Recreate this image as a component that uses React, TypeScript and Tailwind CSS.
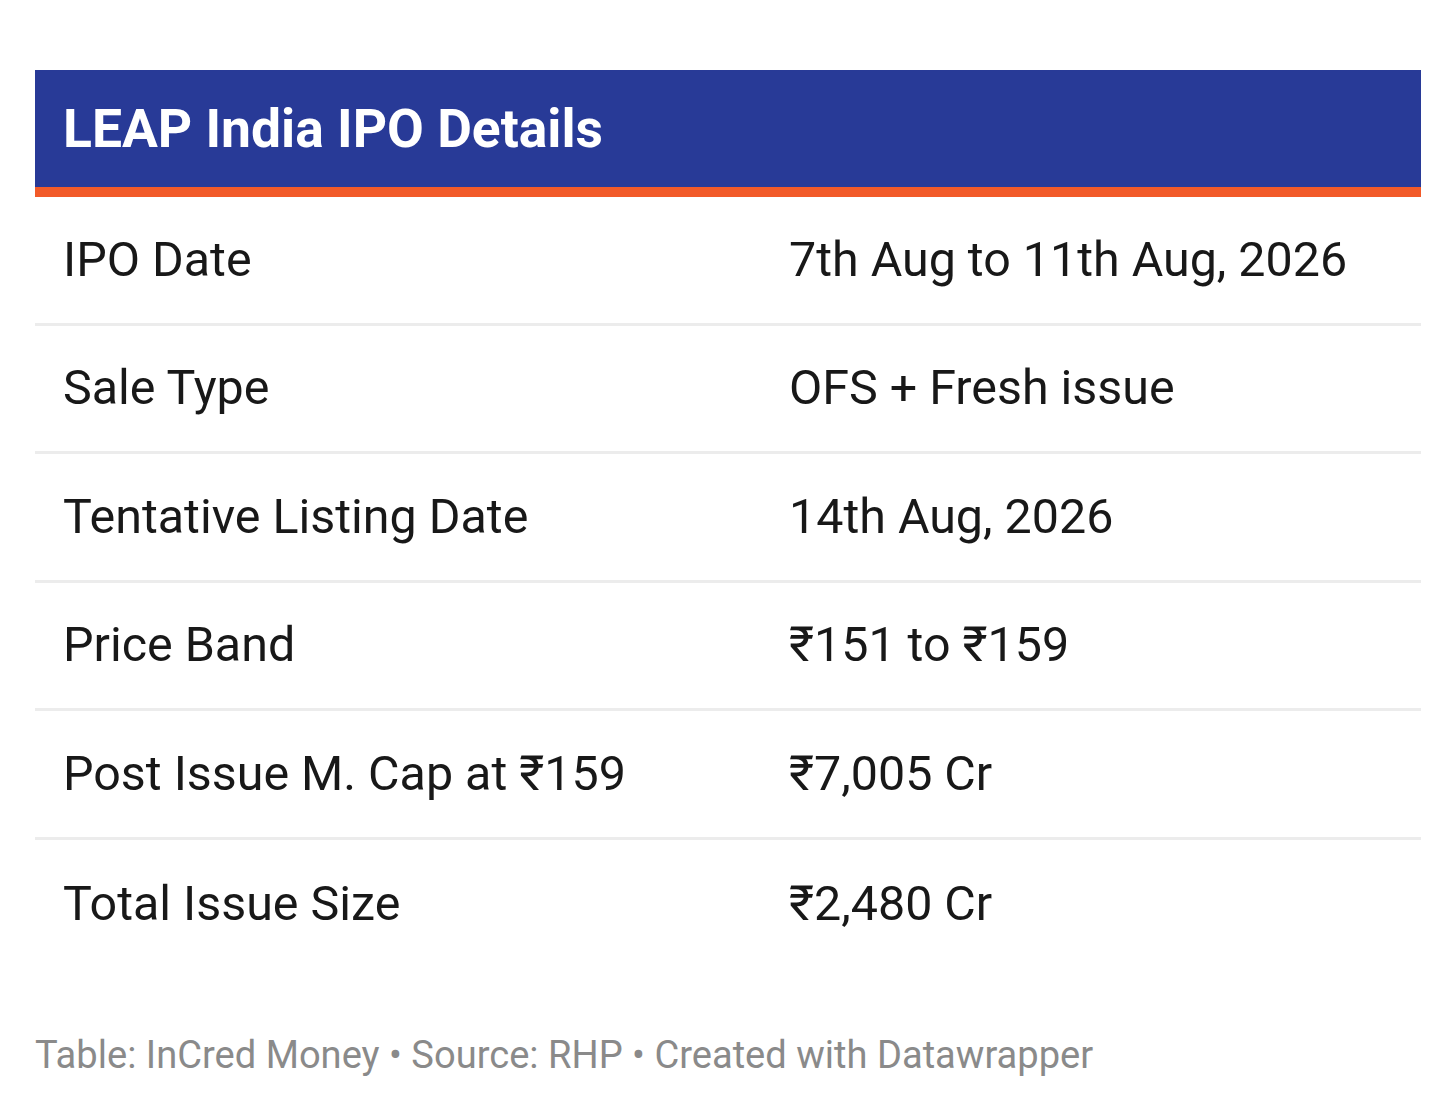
import React from 'react';

const ROWS: [string, string][] = [
    ['IPO Date', '7th Aug to 11th Aug, 2026'],
    ['Sale Type', 'OFS + Fresh issue'],
    ['Tentative Listing Date', '14th Aug, 2026'],
    ['Price Band', '₹151 to ₹159'],
    ['Post Issue M. Cap at ₹159', '₹7,005 Cr'],
    ['Total Issue Size', '₹2,480 Cr'],
];

const App: React.FC = () => {
    return (
        <div className="min-h-[1113px] bg-white pt-[70px] px-[35px] font-['Roboto',sans-serif]">
            <div className="w-[1386px]">
                <div className="h-[127px] bg-[#283a97] border-b-[10px] border-[#f25a29] flex items-center pl-[28px]">
                    <h1 className="text-[53.4px] font-bold text-white leading-none">LEAP India IPO Details</h1>
                </div>
                {ROWS.map(([label, value], i) => (
                    <div
                        key={label}
                        className={
                            i < ROWS.length - 1
                                ? 'grid grid-cols-[755px_1fr] h-[128.5px] items-center border-b-[3px] border-[#ececec] text-[#181818]'
                                : 'grid grid-cols-[755px_1fr] h-[128.5px] items-center text-[#181818]'
                        }
                    >
                        <div className="pl-[28px] text-[48.4px] leading-none">{label}</div>
                        <div className="text-[48.4px] leading-none -ml-[1px]">{value}</div>
                    </div>
                ))}
            </div>
            <p className="mt-[68px] text-[38.1px] leading-none text-[#8a8a8a]">
                Table: InCred Money • Source: RHP • Created with Datawrapper
            </p>
        </div>
    );
};

export default App;
